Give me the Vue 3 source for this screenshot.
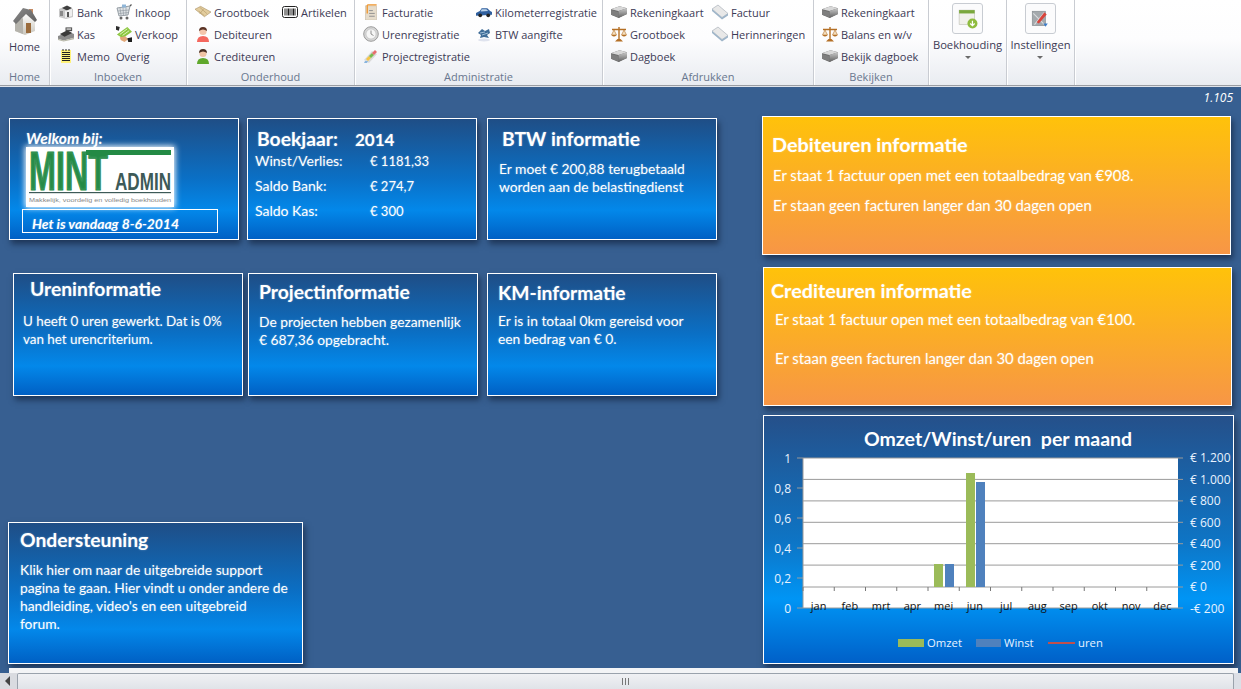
<template>
  <div class="page">
    <!-- icon sheet -->
    <svg class="sheet" width="0" height="0" aria-hidden="true">
      <defs>
        <linearGradient id="grey" x1="0" y1="0" x2="0" y2="1"><stop offset="0" stop-color="#c9c9c9" /><stop offset="1" stop-color="#5f5f5f" /></linearGradient>
        <linearGradient id="wall" x1="0" y1="0" x2="0" y2="1"><stop offset="0" stop-color="#fff" /><stop offset="1" stop-color="#c9c6bd" /></linearGradient>
        <linearGradient id="roof" x1="0" y1="0" x2="1" y2="1"><stop offset="0" stop-color="#8b8b8b" /><stop offset="1" stop-color="#5e5e5e" /></linearGradient>
      </defs>
      <symbol id="i-home" viewBox="0 0 26 28">
        <rect x="17" y="2" width="4" height="7" fill="#c58a62" />
        <path d="M3 15 L3 24 L13 28 L23 24 L23 13 L14 6Z" fill="url(#wall)" />
        <path d="M3 15 L3 24 L11 27 L11 11Z" fill="#b5b3ac" />
        <path d="M1 14 L11 1 L19 3 L25 13 L23 15 L14 7 L4 17Z" fill="url(#roof)" />
        <rect x="14" y="16" width="5" height="10" fill="#9a6b3c" />
      </symbol>
      <symbol id="i-bank" viewBox="0 0 16 16">
        <path d="M1 5 L8 2 L15 5 L15 13 L8 15 L1 13Z" fill="#c8c8c8" />
        <path d="M4 4 L9 1.5 L14 4 L9 6.5Z" fill="#3f3f3f" />
        <path d="M7 7 L14 5 L14 12 L7 14Z" fill="#efefef" />
        <rect x="9" y="8" width="2" height="5" fill="#555" />
        <rect x="2" y="7" width="3" height="5" fill="#8a8a8a" />
      </symbol>
      <symbol id="i-cart" viewBox="0 0 16 16">
        <path d="M1 4 L14 2 L12 11 L3 12Z" fill="#dfe3e6" stroke="#8b949c" stroke-width=".9" />
        <path d="M4 4 L5 11 M7 3.5 L7.5 11 M10 3 L10 11 M2 7 L13 6 M3 9.5 L12.5 8.5" stroke="#8b949c" stroke-width=".6" />
        <path d="M14 2 L15.5 0.5" stroke="#555" stroke-width="1.2" />
        <circle cx="5" cy="14" r="1.5" fill="#666" /><circle cx="11" cy="14" r="1.5" fill="#666" />
        <rect x="6" y="0.5" width="4" height="3" fill="#8fb6d8" />
      </symbol>
      <symbol id="i-kas" viewBox="0 0 17 16">
        <path d="M0 10 L12 6 L17 8 L17 12 L6 15 L0 13Z" fill="#8b8b8b" />
        <path d="M2 8 L10 4 L15 7 L7 11Z" fill="#3a3a3a" />
        <path d="M8 1 L15 1 L15 5 L8 5Z" fill="#4a4a4a" />
        <rect x="9" y="2" width="5" height="1.5" fill="#d8d8d8" />
        <path d="M0 13 L6 15 L17 12 L17 13.5 L6 16 L0 14.5Z" fill="#b8b8a8" />
      </symbol>
      <symbol id="i-verkoop" viewBox="0 0 17 17">
        <path d="M1 9 L12 1 L17 6 L7 13Z" fill="#8cc63f" />
        <path d="M4 9 L12 3 M7 10 L14 5" stroke="#e3f4c3" stroke-width="1" />
        <path d="M0 0 L4 1 L3 5 L0 4Z" fill="#2c2c2c" />
        <path d="M4 12 L10 11 L13 14 L9 17 L5 15Z" fill="#e2a878" />
        <path d="M12 13 L17 12 L17 17 L13 17Z" fill="#1e1e1e" />
      </symbol>
      <symbol id="i-memo" viewBox="0 0 16 16">
        <rect x="3" y="2" width="10" height="13" fill="#fff27a" />
        <path d="M4 4.5H12M4 6.5H12M4 8.5H12M4 10.5H12M4 12.5H12" stroke="#222" stroke-width="1" />
        <path d="M5 1V3M8 1V3M11 1V3" stroke="#222" stroke-width="1" />
      </symbol>
      <symbol id="i-ledger" viewBox="0 0 17 14">
        <path d="M0 4 L6 1 L17 7 L10 12 Z" fill="#e3cd9e" stroke="#a78f62" stroke-width=".6" />
        <path d="M5 2 L13 9 M9 4 L5 9 M4 6 L10 11" stroke="#b69c6c" stroke-width=".7" />
      </symbol>
      <symbol id="i-barcode" viewBox="0 0 16 12">
        <rect x=".5" y=".5" width="15" height="11" rx="2" fill="#fff" stroke="#222" />
        <path d="M3 2.5V9.5M5 2.5V9.5M6.5 2.5V9.5M8 2.5V9.5M10 2.5V9.5M11.5 2.5V9.5M13 2.5V9.5" stroke="#222" stroke-width="1" />
      </symbol>
      <symbol id="i-red" viewBox="0 0 14 16">
        <path d="M1 16 Q1 10 7 10 Q13 10 13 16Z" fill="#f4675e" />
        <circle cx="7" cy="5.5" r="3.6" fill="#f4c5ab" />
        <path d="M3 5 Q3 1 7 1 Q11 1 11 5 Q9 3.5 7 3.5 Q5 3.5 3 5Z" fill="#5b3426" />
      </symbol>
      <symbol id="i-green" viewBox="0 0 14 16">
        <path d="M1 16 Q1 10 7 10 Q13 10 13 16Z" fill="#5fa82c" />
        <circle cx="7" cy="5.5" r="3.6" fill="#f0c4a4" />
        <path d="M3 5 Q3 1 7 1 Q11 1 11 5 Q9 3.5 7 3.5 Q5 3.5 3 5Z" fill="#4a3024" />
      </symbol>
      <symbol id="i-invoice" viewBox="0 0 16 17">
        <rect x="2" y="2" width="12" height="15" fill="#e6dccb" stroke="#c7bba6" stroke-width=".6" />
        <path d="M4 1 V10 M4 1 H14" stroke="#f0952c" stroke-width="1.4" fill="none" />
        <path d="M6 7H10M6 10H12M6 13H12" stroke="#8f8f8f" stroke-width="1" />
      </symbol>
      <symbol id="i-clock" viewBox="0 0 16 16">
        <circle cx="8" cy="8" r="7.3" fill="#d6d6d6" stroke="#9c9c9c" />
        <circle cx="8" cy="8" r="5" fill="#f6f6f6" stroke="#b5b5b5" stroke-width=".5" />
        <path d="M8 8 L8 4.5 M8 8 L10.5 9.5" stroke="#777" stroke-width=".8" />
      </symbol>
      <symbol id="i-project" viewBox="0 0 16 16">
        <path d="M1 12 L9 3 L14 6 L6 15Z" fill="#d9d9d9" />
        <path d="M3 11 L6 8 L8 10 L5 13Z" fill="#f6c544" />
        <path d="M6 8 L9 5 L11 7 L8 10Z" fill="#79bb4d" />
        <path d="M9 5 L12 2 L14 4 L11 7Z" fill="#e76f6f" />
        <path d="M2 13 L5 13 L4 15 L1 15Z" fill="#8ab5de" />
      </symbol>
      <symbol id="i-car" viewBox="0 0 17 12">
        <path d="M0 7 L4 5 L6 2 L12 2 L15 5 L17 6 L17 9 L0 10Z" fill="#2f5f9e" />
        <path d="M6 3 L11 3 L13 5 L5 5.5Z" fill="#bcd3ea" />
        <circle cx="4.5" cy="9.5" r="2" fill="#222" /><circle cx="13" cy="9.5" r="2" fill="#222" />
      </symbol>
      <symbol id="i-btw" viewBox="0 0 16 16">
        <path d="M2 7 L6 3 L9 5 L13 3 L14 7 L11 9 L13 12 L8 11 L4 12 L5 9Z" fill="#3f6c97" />
        <path d="M4 7 L9 6 M6 9 L12 7" stroke="#a9c6dd" stroke-width=".9" />
        <ellipse cx="8" cy="14" rx="6" ry="1.4" fill="#dfe3ee" />
      </symbol>
      <symbol id="i-print" viewBox="0 0 17 14">
        <path d="M0 4 L9 1 L17 3 L17 9 L8 13.5 L0 10Z" fill="#6b6b6b" />
        <path d="M0 4 L9 1 L17 3 L8 6Z" fill="#d8d8d8" />
        <path d="M8 6 L17 3 L17 9 L8 13.5Z" fill="url(#grey)" />
        <path d="M0 5 L8 7 L8 12.5 L0 10Z" fill="#7e7e7e" />
      </symbol>
      <symbol id="i-scale" viewBox="0 0 16 16">
        <path d="M8 1 V13 M1 3.5 H15" stroke="#b46f25" stroke-width="1.4" />
        <path d="M4 15.5 H12 L9.5 13 H6.5Z" fill="#b46f25" />
        <path d="M3 4 L0.5 9 H5.5Z M13 4 L10.5 9 H15.5Z" fill="#f4e0c0" stroke="#b46f25" stroke-width=".6" />
        <path d="M0.5 9 Q3 12 5.5 9Z M10.5 9 Q13 12 15.5 9Z" fill="#b46f25" />
      </symbol>
      <symbol id="i-book" viewBox="0 0 16 15">
        <path d="M0 4.5 L6 0.5 L16 9 L10 13Z" fill="#e8e8e8" stroke="#aab2ba" stroke-width=".7" />
        <path d="M0 4.5 L0 6.5 L10 15 L16 11 L16 9 L10 13Z" fill="#9db4c8" />
      </symbol>
      <symbol id="i-boek" viewBox="0 0 18 18">
        <rect x="1" y="1" width="14" height="13" fill="#f1f1ea" stroke="#b9b9b0" stroke-width=".5" />
        <rect x="1" y="1" width="14" height="3" fill="#7aa83c" />
        <circle cx="13" cy="13" r="4.5" fill="#8fbc3f" />
        <path d="M13 10.5 V14.5 M11 13 L13 15 L15 13" stroke="#fff" stroke-width="1.1" fill="none" />
      </symbol>
      <symbol id="i-inst" viewBox="0 0 18 18">
        <rect x="2" y="2" width="12" height="13" fill="#a4a9ad" stroke="#7f858a" stroke-width=".5" />
        <path d="M3 4 L13 14 M13 3 L4 14" stroke="#d9dcde" stroke-width="1" />
        <path d="M6 12 L13 3 L15 5 L8 13Z" fill="#d9433b" />
        <path d="M12 13 L16 13 L14 16Z" fill="#3a7cc9" />
      </symbol>
    </svg>

    <!-- ribbon -->
    <header class="ribbon">
      <section class="group home-group">
        <div class="group-body home-body">
          <svg class="home-icon"><use href="#i-home" /></svg>
          <span>Home</span>
        </div>
        <div class="group-name">Home</div>
      </section>

      <section v-for="g in groups" :key="g.name" class="group" :style="{ width: g.width + 'px' }">
        <div class="group-body cols">
          <div v-for="(col, i) in g.cols" :key="i" class="col" :style="{ width: col.width + 'px' }">
            <div v-for="item in col.items" :key="item.label" class="rib-item">
              <svg v-if="item.icon" class="rib-icon"><use :href="'#i-' + item.icon" /></svg>
              <span>{{ item.label }}</span>
            </div>
          </div>
        </div>
        <div class="group-name">{{ g.name }}</div>
      </section>

      <section v-for="m in menus" :key="m.label" class="group menu-group" :style="{ width: m.width + 'px' }">
        <div class="menu-btn">
          <span class="menu-frame"><svg class="menu-icon"><use :href="'#i-' + m.icon" /></svg></span>
          <span class="menu-label">{{ m.label }}</span>
          <span class="caret"></span>
        </div>
      </section>
    </header>

    <!-- dashboard -->
    <main class="main">
      <div class="version">1.105</div>
      <div class="content">
        <div class="left">
          <div class="row row1">
            <article class="card blue welcome">
              <div class="welkom">Welkom bij:</div>
              <svg class="logo" viewBox="0 0 148 60" width="148" height="60">
                <text x="3" y="43" class="logo-mint" textLength="79" lengthAdjust="spacingAndGlyphs">MINT</text>
                <rect x="60" y="3" width="85" height="5" fill="#238a45" />
                <text x="89" y="43" class="logo-admin" textLength="56" lengthAdjust="spacingAndGlyphs">ADMIN</text>
                <rect x="3" y="45" width="142" height="1.2" fill="#3d5a58" />
                <text x="3" y="55" class="logo-tag" textLength="142" lengthAdjust="spacingAndGlyphs">Makkelijk, voordelig en volledig boekhouden</text>
              </svg>
              <div class="today">Het is vandaag 8-6-2014</div>
            </article>

            <article class="card blue boekjaar">
              <div class="year-head"><span class="title">Boekjaar:</span><span class="year">2014</span></div>
              <div v-for="r in saldi" :key="r.label" class="saldo">
                <span>{{ r.label }}</span><span class="amount">{{ r.value }}</span>
              </div>
            </article>

            <article class="card blue btw">
              <h2 class="title">BTW informatie</h2>
              <p>Er moet € 200,88 terugbetaald worden aan de belastingdienst</p>
            </article>
          </div>

          <div class="row row2">
            <article class="card blue uren">
              <h2 class="title">Ureninformatie</h2>
              <p>U heeft 0 uren gewerkt. Dat is 0% van het urencriterium.</p>
            </article>
            <article class="card blue project">
              <h2 class="title">Projectinformatie</h2>
              <p>De projecten hebben gezamenlijk € 687,36 opgebracht.</p>
            </article>
            <article class="card blue km">
              <h2 class="title">KM-informatie</h2>
              <p>Er is in totaal 0km gereisd voor een bedrag van € 0.</p>
            </article>
          </div>

          <article class="card blue support">
            <h2 class="title">Ondersteuning</h2>
            <p>Klik hier om naar de uitgebreide support pagina te gaan. Hier vindt u onder andere de handleiding, video's en een uitgebreid<br />forum.</p>
          </article>
        </div>

        <div class="right">
          <article class="card orange deb">
            <h2 class="title">Debiteuren informatie</h2>
            <p>Er staat 1 factuur open met een totaalbedrag van €908.</p>
            <p>Er staan geen facturen langer dan 30 dagen open</p>
          </article>
          <article class="card orange cred">
            <h2 class="title">Crediteuren informatie</h2>
            <p>Er staat 1 factuur open met een totaalbedrag van €100.</p>
            <p>Er staan geen facturen langer dan 30 dagen open</p>
          </article>

          <article class="card chart">
            <svg width="469" height="247" viewBox="1 1 469 247" class="chart-svg">
              <text x="235" y="30.5" class="chart-title" text-anchor="middle">Omzet/Winst/uren&#160; per maand</text>
              <rect x="40" y="43" width="375" height="150" fill="#fff" />
              <line v-for="y in gridY" :key="'g' + y" x1="40" x2="420" :y1="y" :y2="y" stroke="#9a9a9a" />
              <line v-for="y in leftY" :key="'l' + y" x1="34" x2="40" :y1="y" :y2="y" stroke="#9a9a9a" />
              <line x1="40" x2="40" y1="43" y2="193" stroke="#9a9a9a" />
              <line v-for="x in monthTicks" :key="'t' + x" :x1="x" :x2="x" y1="172" y2="176" stroke="#777" />
              <rect v-for="b in bars" :key="b.x" :x="b.x" :y="b.y" width="9" :height="172 - b.y" :fill="b.fill" />
              <text v-for="(m, i) in months" :key="m" :x="40 + 31.25 * i + 15.6" y="195" class="month" text-anchor="middle">{{ m }}</text>
              <text v-for="(t, i) in leftLabels" :key="t" x="28" :y="197.5 - i * 30" class="axis" text-anchor="end">{{ t }}</text>
              <text v-for="(t, i) in rightLabels" :key="t" x="427" :y="197.5 - i * 21.43" class="axis">{{ t }}</text>
              <rect x="135" y="224" width="26" height="8" fill="#9bbb59" />
              <text x="164" y="232" class="legend">Omzet</text>
              <rect x="213" y="224" width="25" height="8" fill="#4f81bd" />
              <text x="241" y="232" class="legend">Winst</text>
              <line x1="285" x2="312" y1="228" y2="228" stroke="#c0504d" stroke-width="2" />
              <text x="315" y="232" class="legend">uren</text>
            </svg>
          </article>
        </div>
      </div>
    </main>

    <div class="strip"></div>

    <!-- scrollbar -->
    <div class="scrollbar">
      <span class="arrow"></span>
      <div class="thumb"><span class="grip"></span></div>
      <span class="corner"></span>
    </div>
  </div>
</template>

<script setup>
const item = (icon, label) => ({ icon, label })

const groups = [
  {
    name: 'Inboeken', width: 137,
    cols: [
      { width: 58, items: [item('bank', 'Bank'), item('kas', 'Kas'), item('memo', 'Memo')] },
      { width: 70, items: [item('cart', 'Inkoop'), item('verkoop', 'Verkoop'), item(null, 'Overig')] }
    ]
  },
  {
    name: 'Onderhoud', width: 168,
    cols: [
      { width: 87, items: [item('ledger', 'Grootboek'), item('red', 'Debiteuren'), item('green', 'Crediteuren')] },
      { width: 70, items: [item('barcode', 'Artikelen')] }
    ]
  },
  {
    name: 'Administratie', width: 248,
    cols: [
      { width: 113, items: [item('invoice', 'Facturatie'), item('clock', 'Urenregistratie'), item('project', 'Projectregistratie')] },
      { width: 125, items: [item('car', 'Kilometerregistratie'), item('btw', 'BTW aangifte')] }
    ]
  },
  {
    name: 'Afdrukken', width: 211,
    cols: [
      { width: 101, items: [item('print', 'Rekeningkaart'), item('scale', 'Grootboek'), item('print', 'Dagboek')] },
      { width: 100, items: [item('book', 'Factuur'), item('book', 'Herinneringen')] }
    ]
  },
  {
    name: 'Bekijken', width: 115,
    cols: [
      { width: 110, items: [item('print', 'Rekeningkaart'), item('scale', 'Balans en w/v'), item('print', 'Bekijk dagboek')] }
    ]
  }
]

const menus = [
  { label: 'Boekhouding', icon: 'boek', width: 78 },
  { label: 'Instellingen', icon: 'inst', width: 68 }
]

const saldi = [
  { label: 'Winst/Verlies:', value: '€ 1181,33' },
  { label: 'Saldo Bank:', value: '€ 274,7' },
  { label: 'Saldo Kas:', value: '€ 300' }
]

// chart
const months = ['jan', 'feb', 'mrt', 'apr', 'mei', 'jun', 'jul', 'aug', 'sep', 'okt', 'nov', 'dec']
const gridY = [43, 64.4, 85.9, 107.3, 128.7, 150.1, 172, 193]
const leftY = [43, 73, 103, 133, 163, 193]
const monthTicks = months.map((m, i) => 40 + 31.25 * i)
const leftLabels = ['0', '0,2', '0,4', '0,6', '0,8', '1']
const rightLabels = ['-€ 200', '€ 0', '€ 200', '€ 400', '€ 600', '€ 800', '€ 1.000', '€ 1.200']
const bars = [
  { x: 171, y: 149, fill: '#9bbb59' },
  { x: 182, y: 149, fill: '#4f81bd' },
  { x: 203, y: 58, fill: '#9bbb59' },
  { x: 213, y: 67, fill: '#4f81bd' }
]
</script>

<style>
html, body { margin: 0; padding: 0; overflow: hidden; }
</style>

<style scoped>
.page {
  width: 1241px;
  height: 689px;
  display: flex;
  flex-direction: column;
  overflow: hidden;
  font-family: "Open Sans", "Liberation Sans", sans-serif;
  background: #375f91;
}
.sheet { position: absolute; }

/* ribbon */
.ribbon {
  height: 85px;
  flex: none;
  display: flex;
  background: linear-gradient(#fff 0%, #fdfdfe 45%, #e9ecf1 100%);
  border-bottom: 1px solid #9a9da3;
  box-shadow: 0 1px 0 #dfe3ea;
  color: #3c3a55;
  font-size: 11px;
}
.group {
  display: flex;
  flex-direction: column;
  border-right: 1px solid #c9ccd2;
  box-shadow: 1px 0 0 #fff;
  box-sizing: border-box;
}
.home-group { width: 50px; }
.group-body { flex: 1; }
.home-body {
  display: flex;
  flex-direction: column;
  align-items: center;
  padding-top: 7px;
  gap: 4px;
}
.home-icon { width: 26px; height: 28px; }
.cols {
  display: flex;
  padding: 1px 0 0 8px;
}
.rib-item {
  height: 22px;
  display: flex;
  align-items: center;
  gap: 3px;
  white-space: nowrap;
}
.rib-icon { width: 16px; height: 16px; flex: none; }
.group-name {
  text-align: center;
  height: 17px;
  line-height: 18px;
  color: #69778f;
  font-size: 11px;
}
.menu-group { align-items: center; }
.menu-btn {
  display: flex;
  flex-direction: column;
  align-items: center;
  padding-top: 3px;
}
.menu-frame {
  width: 29px;
  height: 29px;
  border: 1px solid #c8ccd2;
  border-radius: 3px;
  background: #fbfbfc;
  display: flex;
  align-items: center;
  justify-content: center;
}
.menu-icon { width: 20px; height: 20px; }
.menu-label { margin-top: 3px; white-space: nowrap; font-size: 11.2px; }
.caret {
  margin-top: 4px;
  width: 0;
  height: 0;
  border: 3px solid transparent;
  border-top: 3px solid #6a6a6a;
}

/* main */
.main {
  flex: none;
  height: 581px;
  margin-top: 1px;
  border-top: 1px solid #3a5f8e;
  display: flex;
  flex-direction: column;
  box-sizing: border-box;
  font-family: Lato, "Liberation Sans", sans-serif;
  color: #fff;
}
.version {
  height: 28px;
  text-align: right;
  padding-right: 8px;
  font: italic 12px "Open Sans", sans-serif;
  line-height: 20px;
  color: #fff;
}
.content {
  display: grid;
  grid-template-columns: 762px 472px;
  flex: 1;
}
.left { padding-top: 2px; }
.right { display: flex; flex-direction: column; }

.row { display: flex; }
.row1 { margin-left: 9px; }
.row2 { margin: 33px 0 0 13px; }
.card {
  box-sizing: border-box;
  border: 1px solid #fff;
  box-shadow: 2px 4px 6px rgba(10, 20, 40, .55);
  text-shadow: 0 0 2px rgba(255, 255, 255, .35);
}
.blue {
  width: 230px;
  background: linear-gradient(#1f4e86 0%, #0a70c6 50%, #0388ea 76%, #0060c4 100%);
}
.orange {
  width: 469px;
  height: 139px;
  background: linear-gradient(#ffc20a, #f79646);
}
.title {
  margin: 0;
  font-weight: 700;
  font-size: 19.3px;
  line-height: 22px;
}
p {
  margin: 0;
  font-size: 13.8px;
  line-height: 18px;
}

.row1 .card { height: 122px; }
.welcome { padding: 10px 0 0 12px; }
.welkom {
  font-weight: 700;
  font-style: italic;
  font-size: 15.5px;
  line-height: 18px;
  padding-left: 4px;
}
.logo {
  display: block;
  margin: 0 0 0 4px;
  background: #fff;
  box-shadow: 0 0 6px 1px #fff;
  overflow: visible;
}
.logo-mint { font: 700 56px "Liberation Sans", sans-serif; fill: #238a45; stroke: #238a45; stroke-width: 1.2px; }
.logo-admin { font: 700 24px "Liberation Sans", sans-serif; fill: #3d5a58; }
.logo-tag { font: 400 6px "Liberation Sans", sans-serif; fill: #888; }
.today {
  width: 196px;
  height: 24px;
  box-sizing: border-box;
  margin-top: 2px;
  border: 1px solid #fff;
  padding-left: 9px;
  font-weight: 700;
  font-style: italic;
  font-size: 13.9px;
  line-height: 28px;
}
.boekjaar { margin-left: 8px; padding: 9px 0 0 7px; }
.year-head { display: flex; align-items: baseline; padding-left: 2px; margin-bottom: 2px; }
.year-head .title { width: 98px; }
.year { font-weight: 700; font-size: 17px; }
.saldo {
  display: grid;
  grid-template-columns: 115px 1fr;
  height: 25px;
  line-height: 18px;
  font-size: 14px;
}
.amount { font-size: 13px; }
.btw { margin-left: 10px; padding: 9px 12px 0 11px; }
.btw .title { padding-left: 3px; margin-bottom: 10px; }

.row2 .card { height: 123px; }
.uren { padding: 4px 12px 0 9px; }
.uren .title { padding-left: 7px; margin-bottom: 12px; }
.uren p { font-size: 13.4px; }
.project { margin-left: 5px; padding: 7px 8px 0 10px; }
.project .title { margin-bottom: 10px; }
.km { margin-left: 9px; padding: 8px 8px 0 10px; }
.km .title { margin-bottom: 8px; }

.support {
  width: 295px;
  height: 142px;
  margin: 126px 0 0 8px;
  padding: 6px 4px 0 11px;
}
.support .title { margin-bottom: 10px; }

.orange .title { font-size: 19.8px; }
.orange p { font-size: 14.9px; }
.deb { padding: 16px 0 0 9px; }
.deb .title { margin-bottom: 11px; }
.deb p { margin: 0 0 12px 1px; }
.cred { margin: 12px 0 0 1px; padding: 11px 0 0 7px; }
.cred .title { margin-bottom: 9px; }
.cred p { margin: 0 0 21px 4px; }

.chart {
  width: 471px;
  height: 249px;
  margin: 9px 0 0 1px;
  background: linear-gradient(#25508a 0%, #0e74c4 50%, #0095f5 74%, #0060c8 100%);
  text-shadow: none;
}
.chart-svg { display: block; }
.chart-title { font: 700 19.5px Lato, sans-serif; fill: #fff; }
.axis { font: 400 12px "Open Sans", sans-serif; fill: #e9f3ff; }
.month { font: 400 11px "Open Sans", sans-serif; fill: #111; }
.legend { font: 400 11.3px "Open Sans", sans-serif; fill: #e9f3ff; }

/* bottom */
.strip {
  flex: none;
  height: 5px;
  margin: 0 3px 0 9px;
  background: #f3f4f6;
}
.scrollbar {
  flex: 1;
  display: flex;
  background: #e4e6ea;
}
.arrow {
  width: 17px;
  flex: none;
  position: relative;
  background: #d9dbe0;
}
.arrow::after {
  content: "";
  position: absolute;
  left: 5px;
  top: 3px;
  border: 5px solid transparent;
  border-right: 5px solid #444;
  border-left: 0;
}
.thumb {
  flex: 1;
  border: 1px solid #9aa2ac;
  border-bottom: 0;
  border-radius: 2px 2px 0 0;
  background: linear-gradient(#f0f1f4, #e0e3e8);
  display: flex;
  align-items: center;
  justify-content: center;
}
.grip {
  width: 7px;
  height: 7px;
  background: repeating-linear-gradient(90deg, #777 0 1px, transparent 1px 3px);
}
.corner { width: 7px; flex: none; background: #dcdfe6; }
</style>
